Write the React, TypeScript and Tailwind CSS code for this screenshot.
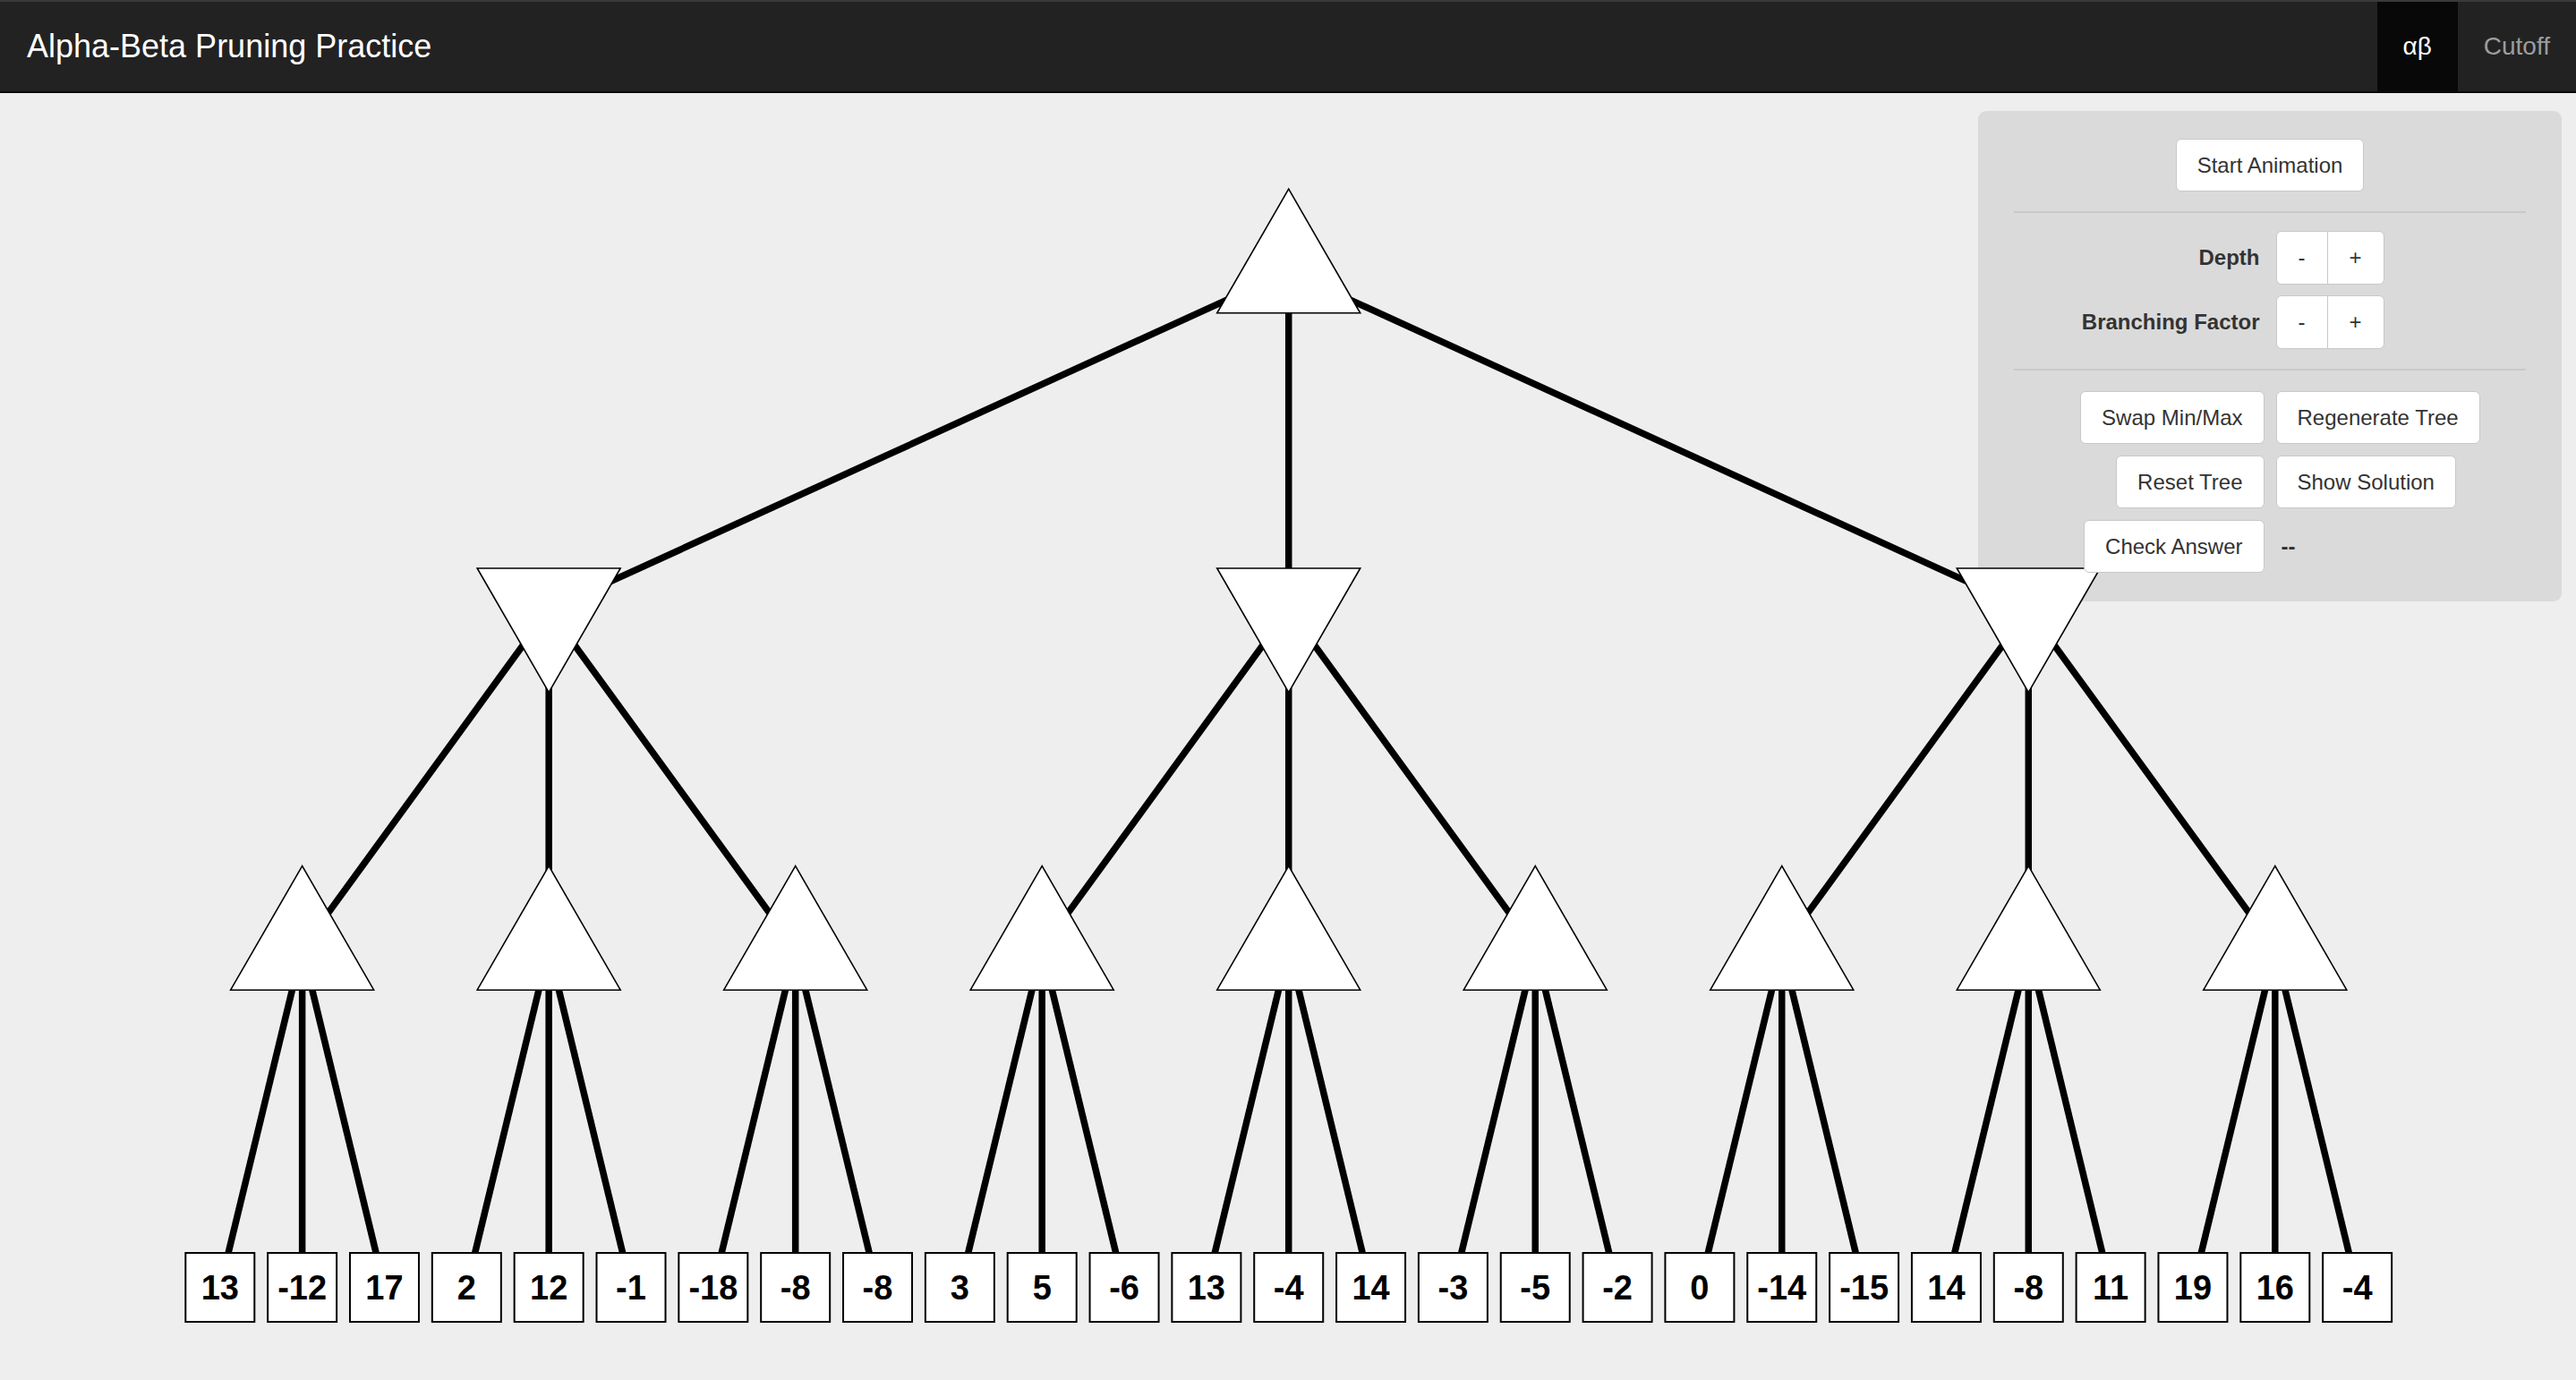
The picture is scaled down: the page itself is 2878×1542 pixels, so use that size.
import React from 'react';

const LEAVES = [13, -12, 17, 2, 12, -1, -18, -8, -8, 3, 5, -6, 13, -4, 14, -3, -5, -2, 0, -14, -15, 14, -8, 11, 19, 16, -4];

const X0 = 245.8;
const PITCH = 91.84;
const LEVEL_Y = [303.6, 681.2, 1060, 1438.5];
const HALF = 80;
const UP = 92.4;
const DOWN = 46.2;

type Node = { x: number; y: number; depth: number; leaf?: number; children: Node[] };

// build a 3-ary tree of depth 3, leaves spread evenly
const build = (depth: number, first: number): Node => {
  const span = Math.pow(3, 3 - depth);
  const x = X0 + PITCH * (first + (span - 1) / 2);
  if (depth === 3) return { x, y: LEVEL_Y[3], depth, leaf: LEAVES[first], children: [] };
  const step = span / 3;
  const children = [0, 1, 2].map((c) => build(depth + 1, first + c * step));
  return { x, y: LEVEL_Y[depth], depth, children };
};

const flatten = (n: Node): Node[] => [n, ...n.children.flatMap(flatten)];

const root = build(0, 0);
const nodes = flatten(root);

const triangle = (n: Node) => {
  // even depth = max (points up), odd depth = min (points down)
  if (n.depth % 2 === 0) {
    return `${n.x},${n.y - UP} ${n.x - HALF},${n.y + DOWN} ${n.x + HALF},${n.y + DOWN}`;
  }
  return `${n.x - HALF},${n.y - DOWN} ${n.x + HALF},${n.y - DOWN} ${n.x},${n.y + UP}`;
};

const Tree = () => (
  <svg
    className="absolute left-0 top-0 z-[1]"
    width={2878}
    height={1438}
    viewBox="0 104 2878 1438"
  >
    {nodes.flatMap((n) =>
      n.children.map((c, i) => (
        <line key={`${n.x}-${i}`} x1={n.x} y1={n.y} x2={c.x} y2={c.y} stroke="#000" strokeWidth={7.5} />
      ))
    )}
    {nodes
      .filter((n) => n.depth < 3)
      .map((n) => (
        <polygon key={`t${n.x}`} points={triangle(n)} fill="#fff" stroke="#000" strokeWidth={1.6} />
      ))}
    {nodes
      .filter((n) => n.depth === 3)
      .map((n) => (
        <g key={`l${n.x}`}>
          <rect x={n.x - 38.5} y={1400} width={77} height={77} fill="#fff" stroke="#000" strokeWidth={2} />
          <text
            x={n.x}
            y={1452}
            textAnchor="middle"
            fontFamily="'Liberation Sans', Arial, sans-serif"
            fontWeight="bold"
            fontSize={38}
            fill="#000"
          >
            {n.leaf}
          </text>
        </g>
      ))}
  </svg>
);

const Btn = ({ children }: { children: React.ReactNode }) => (
  <button className="relative z-[2] h-[59px] px-[23px] bg-white border border-[#c8c8c8] rounded-[6px] text-[24px] leading-none text-[#333333] whitespace-nowrap">
    {children}
  </button>
);

const Stepper = () => (
  <div className="relative z-[2] inline-flex h-[60px]">
    <button className="h-full px-[24px] bg-white border border-[#c8c8c8] rounded-l-[6px] text-[24px] leading-none text-[#333333]">-</button>
    <button className="h-full -ml-px px-[24px] bg-white border border-[#c8c8c8] rounded-r-[6px] text-[24px] leading-none text-[#333333]">+</button>
  </div>
);

const Panel = () => (
  <div className="absolute left-[2210px] top-[20px] w-[652px] h-[548px] bg-[#dadada] rounded-[9px] pt-[31px]">
    <div className="flex justify-center">
      <Btn>Start Animation</Btn>
    </div>
    <div className="mx-[40px] mt-[22px] h-[2px] bg-[#c9c9c9]" />

    <div className="mt-[20px] grid grid-cols-2 gap-x-[13px] gap-y-[12px]">
      <div className="flex items-center justify-end pr-[5px] text-[24px] font-bold text-[#333333]">Depth</div>
      <div className="flex items-center">
        <Stepper />
      </div>
      <div className="flex items-center justify-end pr-[5px] text-[24px] font-bold text-[#333333]">Branching Factor</div>
      <div className="flex items-center">
        <Stepper />
      </div>
    </div>

    <div className="mx-[40px] mt-[22px] h-[2px] bg-[#c9c9c9]" />

    <div className="mt-[23px] grid grid-cols-2 gap-x-[13px] gap-y-[13px]">
      <div className="flex justify-end"><Btn>Swap Min/Max</Btn></div>
      <div className="flex justify-start"><Btn>Regenerate Tree</Btn></div>
      <div className="flex justify-end"><Btn>Reset Tree</Btn></div>
      <div className="flex justify-start"><Btn>Show Solution</Btn></div>
      <div className="flex justify-end"><Btn>Check Answer</Btn></div>
      <div className="flex items-center pl-[6px] text-[24px] font-bold text-[#333333]">--</div>
    </div>
  </div>
);

export default function App() {
  return (
    <div className="w-[2878px] h-[1542px] overflow-hidden bg-[#eeeeee] font-['Liberation_Sans',Arial,sans-serif]">
      <header className="h-[104px] bg-[#222222] border-t-2 border-t-[#3a3a3a] border-b-2 border-b-[#080808] flex items-stretch">
        <div className="flex-1 flex items-center pl-[30px] text-[36px] text-white">Alpha-Beta Pruning Practice</div>
        <div className="flex">
          <div className="flex items-center px-[29px] bg-[#080808] text-white text-[28px]">αβ</div>
          <div className="flex items-center px-[29px] text-[#9d9d9d] text-[28px]">Cutoff</div>
        </div>
      </header>
      <main className="relative h-[1438px]">
        <Panel />
        <Tree />
      </main>
    </div>
  );
}
